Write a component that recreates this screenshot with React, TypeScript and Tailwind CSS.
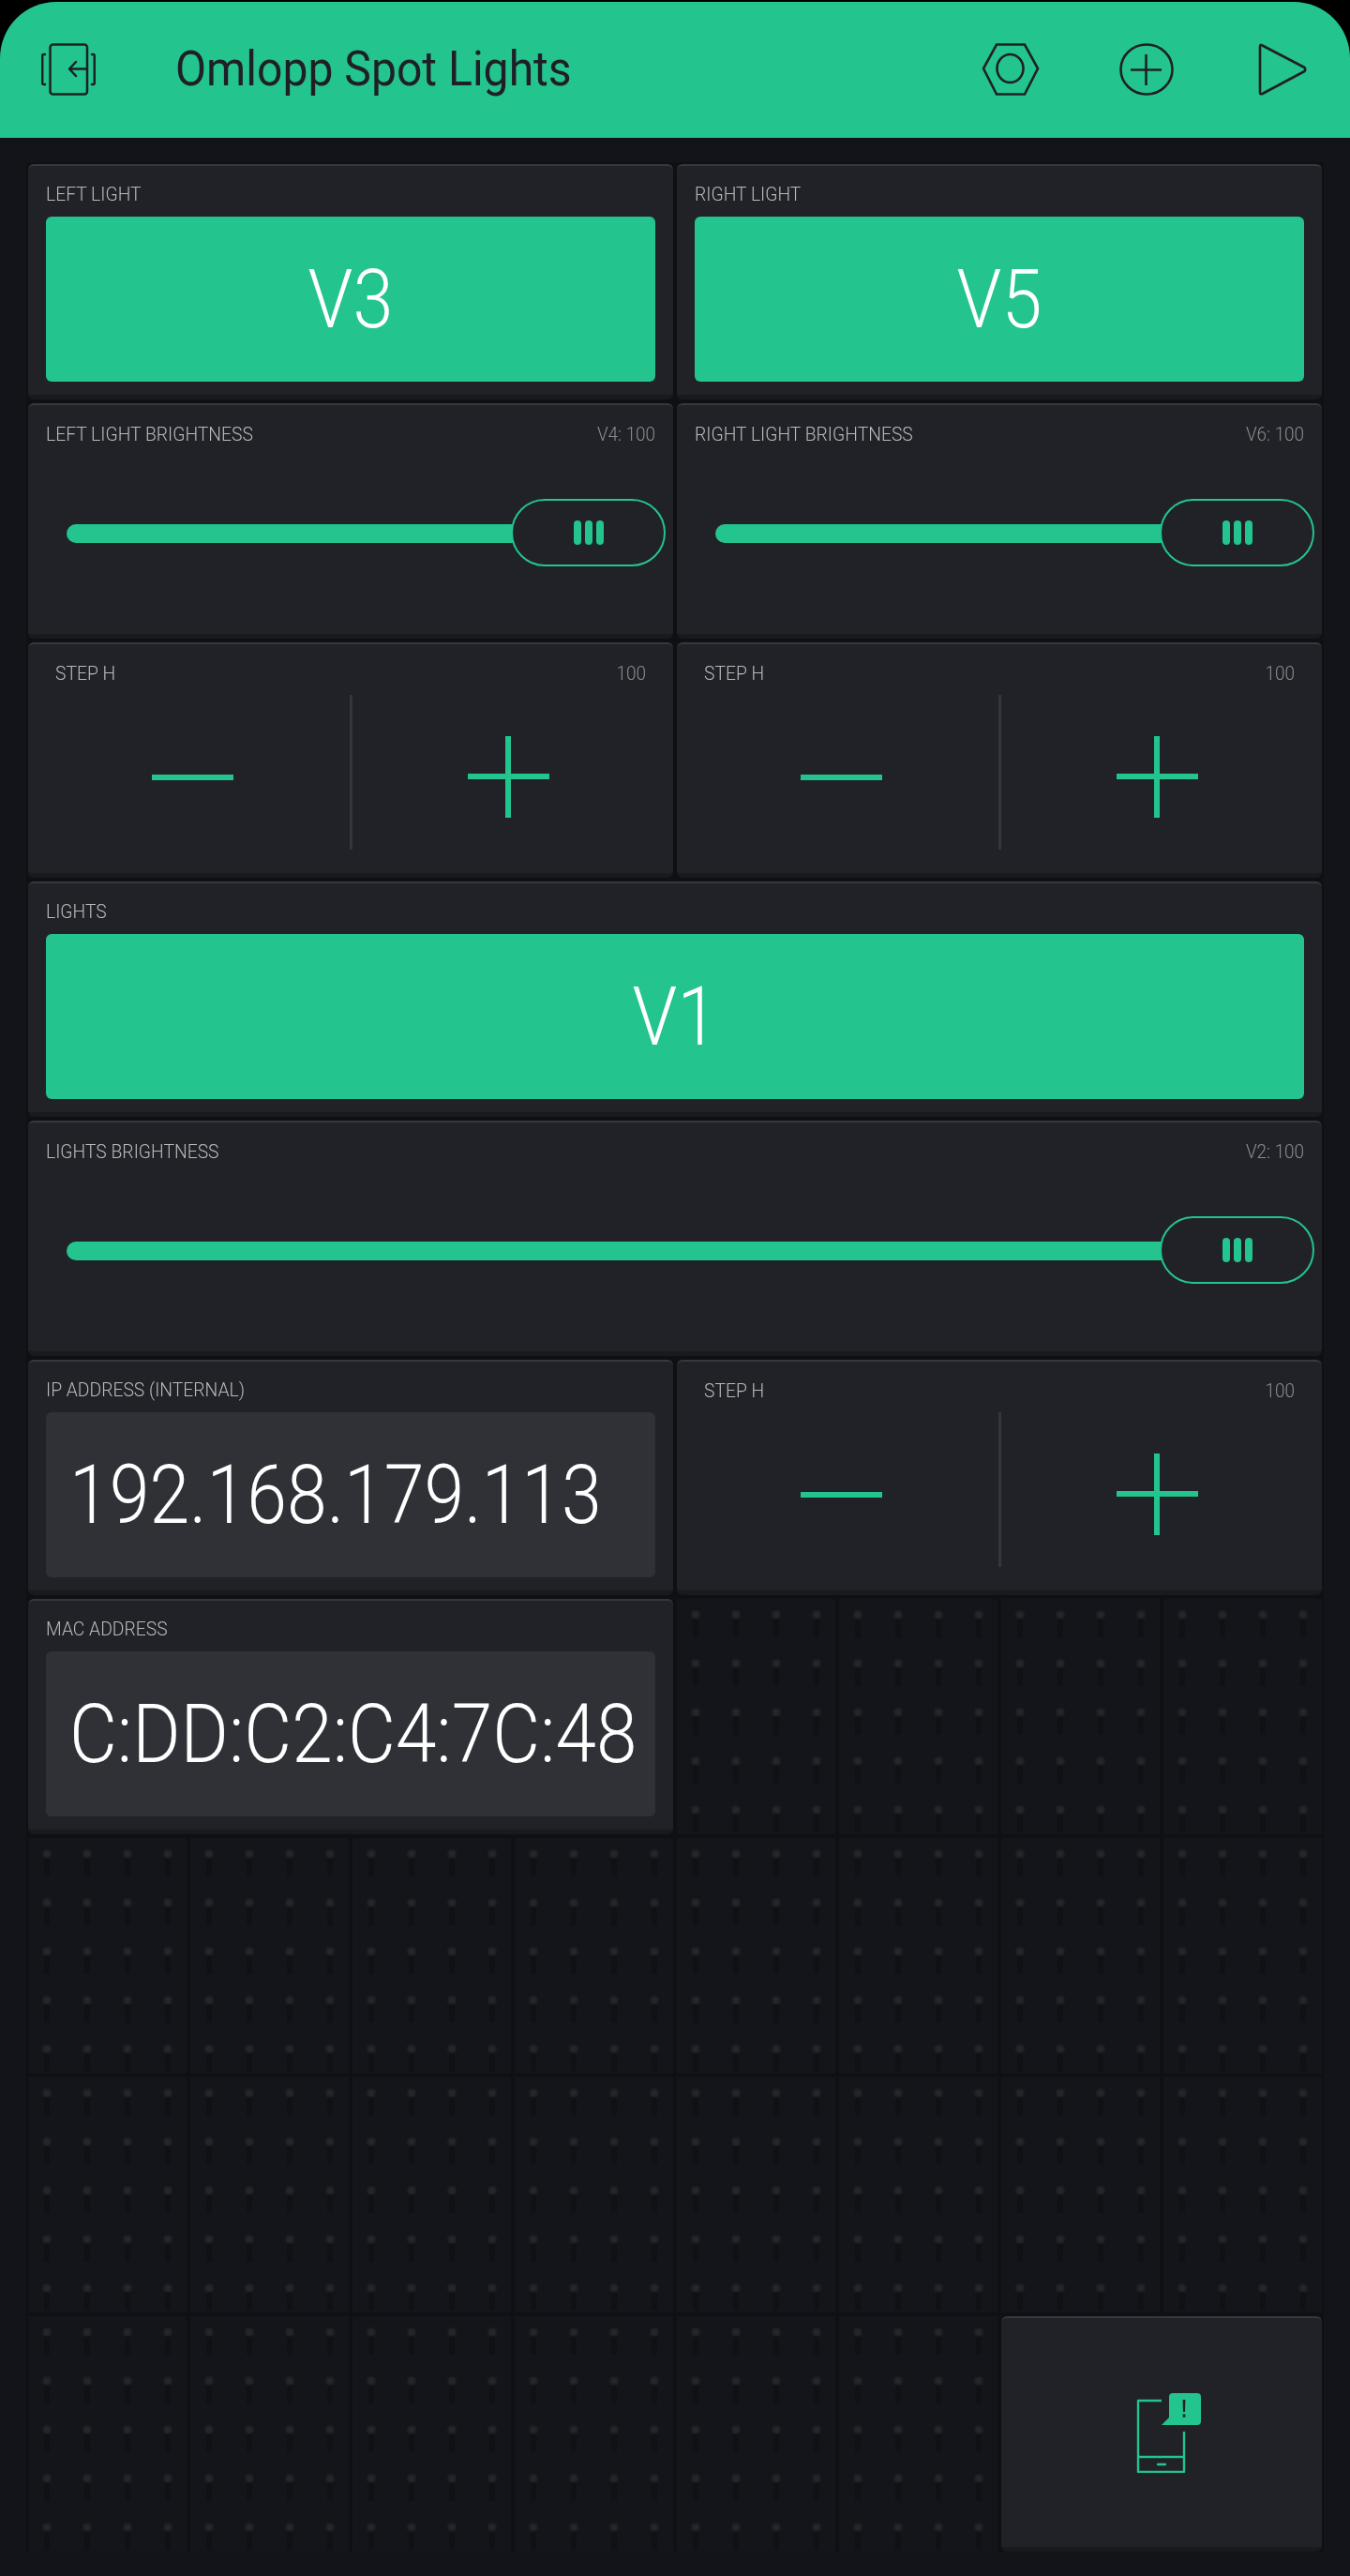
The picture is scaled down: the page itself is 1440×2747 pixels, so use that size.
import React from "react";

const FONT = "font-['Roboto',_'Liberation_Sans',_sans-serif]";

const Card = ({ span, children }: { span: string; children?: React.ReactNode }) => (
  <div
    className={`${span} flex flex-col overflow-hidden rounded-md border-t-2 border-b-[5px] border-t-[#37383d] border-b-[#191a1d] bg-[#212227]`}
  >
    {children}
  </div>
);

const Label = ({ text, className = "" }: { text: string; className?: string }) => (
  <span
    className={`block origin-left scale-x-[0.92] whitespace-nowrap text-[21px] leading-[24px] font-light text-[#b9babc] ${className}`}
  >
    {text}
  </span>
);

const Value = ({ text }: { text: string }) => (
  <span className="block origin-right scale-x-[0.9] whitespace-nowrap text-[21px] leading-[24px] font-light text-[#8b8c8f]">
    {text}
  </span>
);

const ButtonWidget = ({ label, pin, span }: { label: string; pin: string; span: string }) => (
  <Card span={span}>
    <div className="px-[19px] pt-[18px] pb-[12px]">
      <Label text={label} />
    </div>
    <div className="mx-[19px] flex h-[176px] items-center justify-center rounded-[6px] bg-[#23c48e]">
      <span className="scale-x-[0.89] text-[87px] leading-none font-[350] text-white">{pin}</span>
    </div>
  </Card>
);

const Slider = ({ label, value, span }: { label: string; value: string; span: string }) => (
  <Card span={span}>
    <div className="flex items-center justify-between px-[19px] pt-[19px]">
      <Label text={label} />
      <Value text={value} />
    </div>
    <div className="mt-[57px] flex items-center pr-[8px] pl-[41px]">
      <div className="-mr-[3px] mt-[2px] h-[20px] flex-1 rounded-l-full bg-[#23c48e]" />
      <div className="relative flex h-[72px] w-[165px] items-center justify-center gap-[4px] rounded-full border-2 border-[#23c48e] bg-[#212227]">
        <span className="h-[26px] w-[8px] rounded-full bg-[#23c48e]" />
        <span className="h-[26px] w-[8px] rounded-full bg-[#23c48e]" />
        <span className="h-[26px] w-[8px] rounded-full bg-[#23c48e]" />
      </div>
    </div>
  </Card>
);

const Stepper = ({ span }: { span: string }) => (
  <Card span={span}>
    <div className="mt-[19px] flex items-center justify-between px-[29px]">
      <Label text="STEP H" />
      <Value text="100" />
    </div>
    <div className="mx-[8px] mt-[11px] flex h-[165px]">
      <div className="flex flex-1 items-center justify-center pt-[10px]">
        <span className="h-[6px] w-[87px] bg-[#23c48e]" />
      </div>
      <div className="w-[3px] bg-[#35363b]" />
      <div className="flex flex-1 items-center justify-center pt-[10px]">
        <div className="relative h-[87px] w-[87px]">
          <span className="absolute top-[40px] left-0 h-[6px] w-[87px] bg-[#23c48e]" />
          <span className="absolute top-0 left-[40px] h-[87px] w-[6px] bg-[#23c48e]" />
        </div>
      </div>
    </div>
  </Card>
);

const Display = ({ label, text, fit, span }: { label: string; text: string; fit: string; span: string }) => (
  <Card span={span}>
    <div className="px-[19px] pt-[18px] pb-[12px]">
      <Label text={label} />
    </div>
    <div className="mx-[19px] flex h-[176px] items-center overflow-hidden rounded-[6px] bg-[#303136] pl-[25px]">
      <span className={`block origin-left whitespace-nowrap text-[87px] leading-none font-[350] text-white ${fit}`}>
        {text}
      </span>
    </div>
  </Card>
);

const EmptyCell = () => (
  <div className="grid auto-rows-[52px] grid-cols-[repeat(4,43px)] overflow-hidden bg-[#14151a] pt-[13px] pl-[16px]">
    {Array.from({ length: 20 }).map((_, i) => (
      <div key={i} className="flex w-[8px] flex-col items-center">
        <div className="h-[8px] w-[8px] rounded-[2px] bg-[#252629] blur-[1px]" />
        <div className="h-[20px] w-[6px] bg-[#101115]" />
      </div>
    ))}
  </div>
);

const BackIcon = () => (
  <svg width="58" height="56" viewBox="0 0 58 56" fill="none" stroke="#1f2025" strokeWidth="2.5" strokeLinejoin="round" strokeLinecap="round">
    <rect x="9.5" y="1.5" width="39.5" height="53" rx="3" />
    <path d="M4 12H2.5Q1.2 12 1.2 13.5V42.5Q1.2 44 2.5 44H4" />
    <path d="M54 12H55.5Q56.8 12 56.8 13.5V42.5Q56.8 44 55.5 44H54" />
    <path d="M49 27.5H30.5M37 20L30 27.5L37 35" />
  </svg>
);

const NutIcon = () => (
  <svg width="62" height="56" viewBox="0 0 62 56" fill="none" stroke="#1f2025" strokeWidth="2.6">
    <path d="M16 1.5H46L60 27L46 54.5H16L2 27Z" />
    <ellipse cx="30.5" cy="27" rx="14" ry="15" />
  </svg>
);

const PlusIcon = () => (
  <svg width="58" height="56" viewBox="0 0 58 56" fill="none" stroke="#1f2025" strokeWidth="2.6">
    <ellipse cx="29" cy="28" rx="27.5" ry="26.5" />
    <path d="M12 28.5H45M28.5 12V45" />
  </svg>
);

const PlayIcon = () => (
  <svg width="52" height="56" viewBox="0 0 52 56" fill="none" stroke="#1f2025" strokeWidth="2.6" strokeLinejoin="round">
    <path d="M2 3.5Q2 .8 4.5 2.5L49.5 26Q51 28 49.5 30L4.5 54Q2 55 2 52.5Z" />
  </svg>
);

const NotifyIcon = () => (
  <svg width="84" height="85" viewBox="0 0 84 85" fill="none">
    <path d="M42 8H17V84H66V41M17 68H66" stroke="#23c48e" strokeWidth="2.4" strokeLinejoin="round" />
    <path d="M38 76H46" stroke="#23c48e" strokeWidth="2.4" strokeLinecap="round" />
    <path d="M54 0H80Q84 0 84 4V30Q84 34 80 34H42L50 26V4Q50 0 54 0Z" fill="#23c48e" />
    <path d="M64.6 7H67.4L67 20H65Z" fill="#212227" />
    <rect x="64.6" y="22.5" width="2.8" height="3.2" fill="#212227" />
  </svg>
);

export default function App() {
  return (
    <div className={`${FONT} h-[2747px] w-[1440px] overflow-hidden bg-black pt-[2px]`}>
      <div className="flex h-[145px] items-center rounded-t-[60px] bg-[#23c48e] pb-[2px] pl-[44px]">
        <BackIcon />
        <h1 className="ml-[85px] flex-1 origin-left scale-x-[0.925] whitespace-nowrap text-[52px] leading-none font-normal text-[#1f2025]">
          Omlopp Spot Lights
        </h1>
        <div className="flex items-center pr-[46px]">
          <NutIcon />
          <div className="ml-[85px]">
            <PlusIcon />
          </div>
          <div className="ml-[90px]">
            <PlayIcon />
          </div>
        </div>
      </div>

      <div className="h-[2600px] bg-[#13141a] px-[28px] pt-[26px]">
        <div className="grid auto-rows-[251px] grid-cols-8 gap-[4px] bg-[#0f1014] px-[2px] pt-[2px] pb-px">
          <ButtonWidget span="col-span-4" label="LEFT LIGHT" pin="V3" />
          <ButtonWidget span="col-span-4" label="RIGHT LIGHT" pin="V5" />
          <Slider span="col-span-4" label="LEFT LIGHT BRIGHTNESS" value="V4: 100" />
          <Slider span="col-span-4" label="RIGHT LIGHT BRIGHTNESS" value="V6: 100" />
          <Stepper span="col-span-4" />
          <Stepper span="col-span-4" />
          <ButtonWidget span="col-span-8" label="LIGHTS" pin="V1" />
          <Slider span="col-span-8" label="LIGHTS BRIGHTNESS" value="V2: 100" />
          <Display span="col-span-4" label="IP ADDRESS (INTERNAL)" text="192.168.179.113" fit="scale-x-[0.885]" />
          <Stepper span="col-span-4" />
          <Display span="col-span-4" label="MAC ADDRESS" text="C:DD:C2:C4:7C:48" fit="scale-x-[0.9]" />
          {Array.from({ length: 26 }).map((_, i) => (
            <EmptyCell key={i} />
          ))}
          <Card span="col-span-2">
            <div className="flex flex-1 items-center justify-center">
              <NotifyIcon />
            </div>
          </Card>
        </div>
      </div>
    </div>
  );
}
